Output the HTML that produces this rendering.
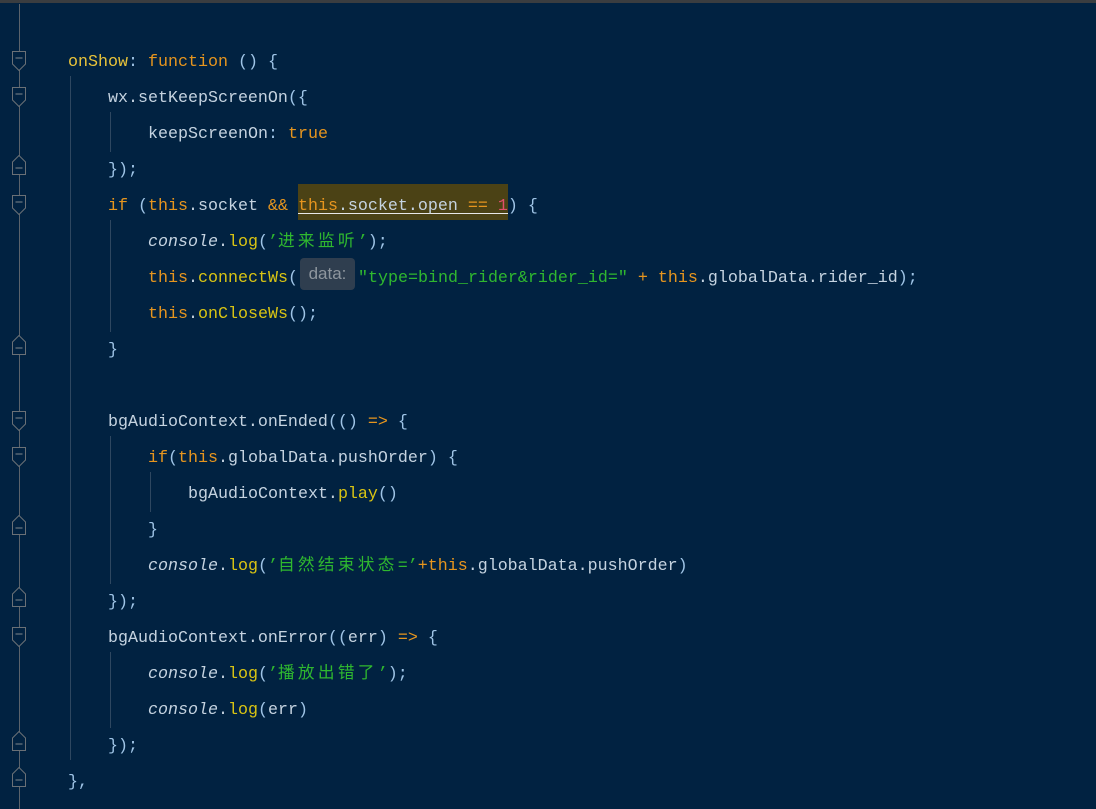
<!DOCTYPE html>
<html><head><meta charset="utf-8"><style>
body{margin:0;width:1096px;height:809px;background:#012241;overflow:hidden;position:relative;font-family:"Liberation Mono","Noto Sans CJK SC",monospace;font-size:16.67px;}
.top{position:absolute;left:0;top:0;width:1096px;height:3px;background:#3a3d40}
.gut{position:absolute;left:19px;top:4px;width:1px;height:805px;background:#5b636b}
.g{position:absolute;width:1px;background:#2e4760}
.l{position:absolute;white-space:pre;height:36px;line-height:36px;color:#c5d3e0}
.k{color:#e6951e}.y{color:#d9c413}.s{color:#2fb82f}.i{font-style:italic;color:#c5d3e0}.p{color:#9fc4e6}.n{color:#e8c33a}
.cj{letter-spacing:3.3px}
svg.m{position:absolute;left:11px;width:16px;height:20px}
</style></head><body>
<div class="top"></div>
<div class="gut"></div>
<div class="g" style="left:70px;top:76px;height:684px"></div>
<div class="g" style="left:110px;top:112px;height:40px"></div>
<div class="g" style="left:110px;top:220px;height:112px"></div>
<div class="g" style="left:110px;top:436px;height:148px"></div>
<div class="g" style="left:150px;top:472px;height:40px"></div>
<div class="g" style="left:110px;top:652px;height:76px"></div>

<svg class="m" style="top:51px" viewBox="0 0 16 20"><path d="M1.5 0.5H14.5V13L8 19.5L1.5 13Z" fill="#012241" stroke="#6a7076"/><path d="M4.5 7H11.5" stroke="#80868c"/></svg>
<svg class="m" style="top:87px" viewBox="0 0 16 20"><path d="M1.5 0.5H14.5V13L8 19.5L1.5 13Z" fill="#012241" stroke="#6a7076"/><path d="M4.5 7H11.5" stroke="#80868c"/></svg>
<svg class="m" style="top:155px" viewBox="0 0 16 20"><path d="M1.5 19.5H14.5V7L8 0.5L1.5 7Z" fill="#012241" stroke="#6a7076"/><path d="M4.5 13H11.5" stroke="#80868c"/></svg>
<svg class="m" style="top:195px" viewBox="0 0 16 20"><path d="M1.5 0.5H14.5V13L8 19.5L1.5 13Z" fill="#012241" stroke="#6a7076"/><path d="M4.5 7H11.5" stroke="#80868c"/></svg>
<svg class="m" style="top:335px" viewBox="0 0 16 20"><path d="M1.5 19.5H14.5V7L8 0.5L1.5 7Z" fill="#012241" stroke="#6a7076"/><path d="M4.5 13H11.5" stroke="#80868c"/></svg>
<svg class="m" style="top:411px" viewBox="0 0 16 20"><path d="M1.5 0.5H14.5V13L8 19.5L1.5 13Z" fill="#012241" stroke="#6a7076"/><path d="M4.5 7H11.5" stroke="#80868c"/></svg>
<svg class="m" style="top:447px" viewBox="0 0 16 20"><path d="M1.5 0.5H14.5V13L8 19.5L1.5 13Z" fill="#012241" stroke="#6a7076"/><path d="M4.5 7H11.5" stroke="#80868c"/></svg>
<svg class="m" style="top:515px" viewBox="0 0 16 20"><path d="M1.5 19.5H14.5V7L8 0.5L1.5 7Z" fill="#012241" stroke="#6a7076"/><path d="M4.5 13H11.5" stroke="#80868c"/></svg>
<svg class="m" style="top:587px" viewBox="0 0 16 20"><path d="M1.5 19.5H14.5V7L8 0.5L1.5 7Z" fill="#012241" stroke="#6a7076"/><path d="M4.5 13H11.5" stroke="#80868c"/></svg>
<svg class="m" style="top:627px" viewBox="0 0 16 20"><path d="M1.5 0.5H14.5V13L8 19.5L1.5 13Z" fill="#012241" stroke="#6a7076"/><path d="M4.5 7H11.5" stroke="#80868c"/></svg>
<svg class="m" style="top:731px" viewBox="0 0 16 20"><path d="M1.5 19.5H14.5V7L8 0.5L1.5 7Z" fill="#012241" stroke="#6a7076"/><path d="M4.5 13H11.5" stroke="#80868c"/></svg>
<svg class="m" style="top:767px" viewBox="0 0 16 20"><path d="M1.5 19.5H14.5V7L8 0.5L1.5 7Z" fill="#012241" stroke="#6a7076"/><path d="M4.5 13H11.5" stroke="#80868c"/></svg>

<div style="position:absolute;left:298px;top:184px;width:210px;height:36px;background:#4b4215"></div>
<div style="position:absolute;left:298px;top:213px;width:210px;height:1px;background:#e8e8e8"></div>
<div style="position:absolute;left:300px;top:258px;width:55px;height:32px;background:#2f3e4f;border-radius:4px;color:#8e969e;font-family:'Liberation Sans',sans-serif;font-size:17px;line-height:32px;text-align:center">data:</div>

<div class="l" style="left:68px;top:45px"><span class="n">onShow</span><span class="p">:</span> <span class="k">function</span> <span class="p">() {</span></div>
<div class="l" style="left:108px;top:81px">wx.setKeepScreenOn<span class="p">({</span></div>
<div class="l" style="left:148px;top:117px">keepScreenOn<span class="p">:</span> <span class="k">true</span></div>
<div class="l" style="left:108px;top:153px"><span class="p">});</span></div>
<div class="l" style="left:108px;top:189px"><span class="k">if</span> <span class="p">(</span><span class="k">this</span>.socket <span class="k">&amp;&amp;</span> <span class="k">this</span>.socket.open <span class="k">==</span> <span style="color:#e0506a">1</span><span class="p">) {</span></div>
<div class="l" style="left:148px;top:225px"><span class="i">console</span>.<span class="y">log</span><span class="p">(</span><span class="s">’<span class="cj">进来监听</span>’</span><span class="p">);</span></div>
<div class="l" style="left:148px;top:261px"><span class="k">this</span>.<span class="y">connectWs</span><span class="p">(</span></div>
<div class="l" style="left:358px;top:261px"><span class="s">"type=bind_rider&amp;rider_id="</span> <span class="k">+</span> <span class="k">this</span>.globalData.rider_id<span class="p">);</span></div>
<div class="l" style="left:148px;top:297px"><span class="k">this</span>.<span class="y">onCloseWs</span><span class="p">();</span></div>
<div class="l" style="left:108px;top:333px"><span class="p">}</span></div>
<div class="l" style="left:108px;top:405px">bgAudioContext.onEnded<span class="p">(()</span> <span class="k">=&gt;</span> <span class="p">{</span></div>
<div class="l" style="left:148px;top:441px"><span class="k">if</span><span class="p">(</span><span class="k">this</span>.globalData.pushOrder<span class="p">) {</span></div>
<div class="l" style="left:188px;top:477px">bgAudioContext.<span class="y">play</span><span class="p">()</span></div>
<div class="l" style="left:148px;top:513px"><span class="p">}</span></div>
<div class="l" style="left:148px;top:549px"><span class="i">console</span>.<span class="y">log</span><span class="p">(</span><span class="s">’<span class="cj">自然结束状态</span>=’</span><span class="k">+this</span>.globalData.pushOrder<span class="p">)</span></div>
<div class="l" style="left:108px;top:585px"><span class="p">});</span></div>
<div class="l" style="left:108px;top:621px">bgAudioContext.onError<span class="p">((</span>err<span class="p">)</span> <span class="k">=&gt;</span> <span class="p">{</span></div>
<div class="l" style="left:148px;top:657px"><span class="i">console</span>.<span class="y">log</span><span class="p">(</span><span class="s">’<span class="cj">播放出错了</span>’</span><span class="p">);</span></div>
<div class="l" style="left:148px;top:693px"><span class="i">console</span>.<span class="y">log</span><span class="p">(</span>err<span class="p">)</span></div>
<div class="l" style="left:108px;top:729px"><span class="p">});</span></div>
<div class="l" style="left:68px;top:765px"><span class="p">},</span></div>
</body></html>
